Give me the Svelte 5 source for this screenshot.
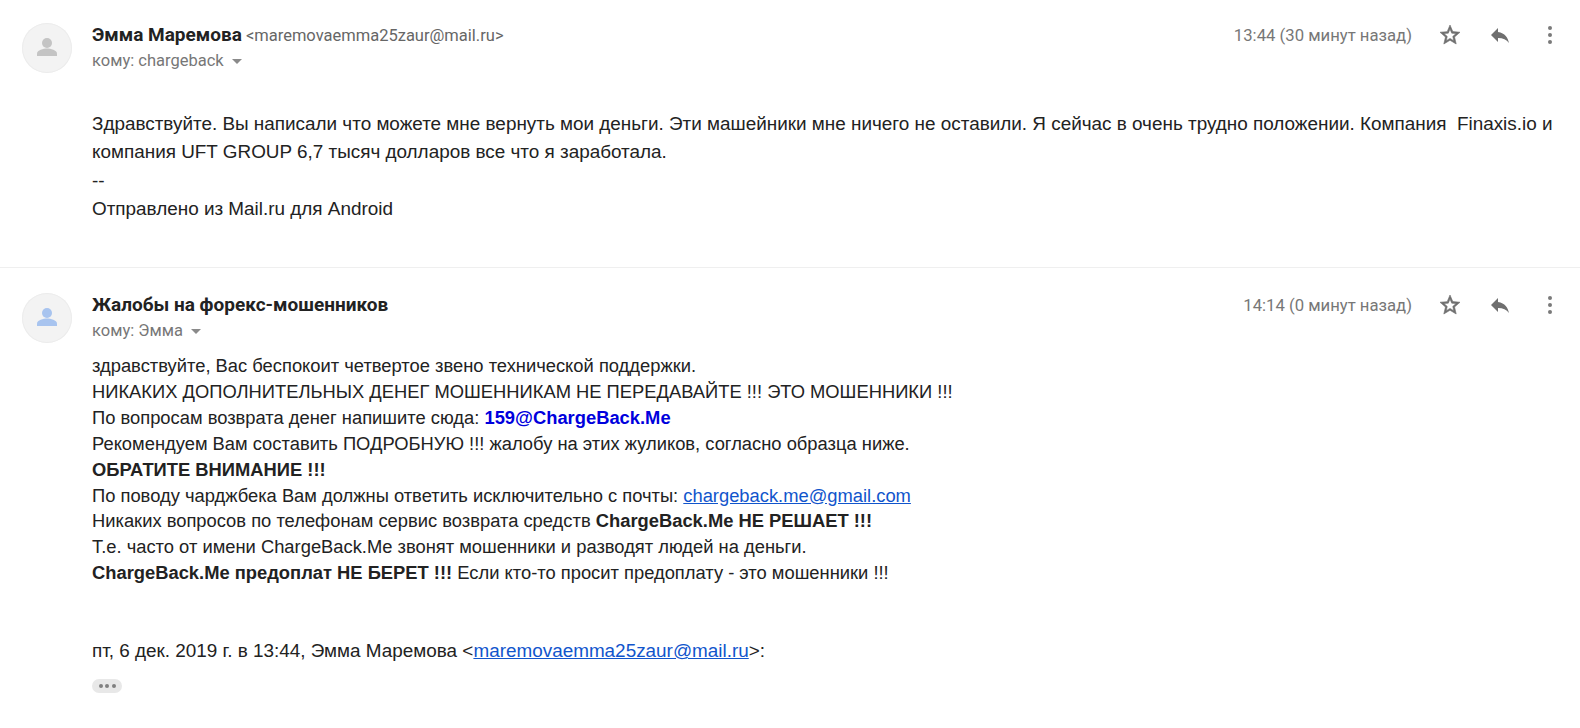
<script>
  const messages = [
    {
      name: 'Эмма Маремова',
      email: '<maremovaemma25zaur@mail.ru>',
      to: 'кому: chargeback',
      time: '13:44 (30 минут назад)',
      tint: '#c4c4c4'
    },
    {
      name: 'Жалобы на форекс-мошенников',
      to: 'кому: Эмма',
      time: '14:14 (0 минут назад)',
      tint: '#a8c4ef'
    }
  ];
</script>

{#snippet header(m)}
  <div class="avatar">
    <svg viewBox="0 0 50 50" width="50" height="50" aria-hidden="true">
      <circle cx="25" cy="20" r="5" fill={m.tint} />
      <path d="M15 33v-2.500c0-3.500 6.500-5 10-5s10 1.500 10 5V33z" fill={m.tint} />
    </svg>
  </div>
  <div class="head">
    <div class="who">
      <div class="from"><b>{m.name}</b>{#if m.email}<span class="email">{m.email}</span>{/if}</div>
      <div class="to">{m.to}<svg class="caret" width="10" height="5" viewBox="0 0 10 5"><path d="M0 0h10L5 5z" fill="#8a8a8a" /></svg></div>
    </div>
    <div class="meta">
      <span class="time">{m.time}</span>
      <svg class="star" width="24" height="24" viewBox="0 0 24 24"><path d="M22 9.240l-7.190-.62L12 2 9.190 8.630 2 9.240l5.460 4.730L5.820 21 12 17.270 18.180 21l-1.630-7.030L22 9.240zM12 15.400l-3.760 2.270 1-4.280-3.320-2.880 4.380-.38L12 6.100l1.710 4.040 4.380.38-3.320 2.880 1 4.280L12 15.400z" fill="#6f6f6f" stroke="#6f6f6f" stroke-width="0.600" /></svg>
      <svg class="reply" width="24" height="24" viewBox="0 0 24 24"><path d="M10 9V5l-7 7 7 7v-4.100c5 0 8.500 1.600 11 5.100-1-5-4-10-11-11z" fill="#6f6f6f" /></svg>
      <svg class="more" width="6" height="20" viewBox="0 0 6 20"><circle cx="3" cy="3" r="2" fill="#7a7a7a" /><circle cx="3" cy="10" r="2" fill="#7a7a7a" /><circle cx="3" cy="17" r="2" fill="#7a7a7a" /></svg>
    </div>
  </div>
{/snippet}

<main class="thread">
  <section class="message first">
    <div class="row">{@render header(messages[0])}</div>
    <div class="body loose">
      <p>Здравствуйте. Вы написали что можете мне вернуть мои деньги. Эти машейники мне ничего не оставили. Я сейчас в очень трудно положении. Компания&nbsp; Finaxis.io и</p>
      <p>компания UFT GROUP 6,7 тысяч долларов все что я заработала.</p>
      <p>--</p>
      <p>Отправлено из Mail.ru для Android</p>
    </div>
  </section>

  <section class="message second">
    <div class="row">{@render header(messages[1])}</div>
    <div class="body tight">
      <p>здравствуйте, Вас беспокоит четвертое звено технической поддержки.</p>
      <p>НИКАКИХ ДОПОЛНИТЕЛЬНЫХ ДЕНЕГ МОШЕННИКАМ НЕ ПЕРЕДАВАЙТЕ !!! ЭТО МОШЕННИКИ !!!</p>
      <p>По вопросам возврата денег напишите сюда: <b class="blue">159@ChargeBack.Me</b></p>
      <p>Рекомендуем Вам составить ПОДРОБНУЮ !!! жалобу на этих жуликов, согласно образца ниже.</p>
      <p><b>ОБРАТИТЕ ВНИМАНИЕ !!!</b></p>
      <p>По поводу чарджбека Вам должны ответить исключительно с почты: <a href="#a">chargeback.me@gmail.com</a></p>
      <p>Никаких вопросов по телефонам сервис возврата средств <b>ChargeBack.Me НЕ РЕШАЕТ !!!</b></p>
      <p>Т.е. часто от имени ChargeBack.Me звонят мошенники и разводят людей на деньги.</p>
      <p><b>ChargeBack.Me предоплат НЕ БЕРЕТ !!!</b> Если кто-то просит предоплату - это мошенники !!!</p>
      <p class="quote">пт, 6 дек. 2019 г. в 13:44, Эмма Маремова &lt;<a href="#b">maremovaemma25zaur@mail.ru</a>&gt;:</p>
      <div class="dots"><i></i><i></i><i></i></div>
    </div>
  </section>
</main>

<style>
  :global(body) { background: #fff; margin: 0; }
  .thread { width: 1580px; height: 728px; overflow: hidden; font-family: "Liberation Sans", Arial, sans-serif; color: #222; }
  .message { padding-left: 22px; }
  .first { height: 268px; box-sizing: border-box; padding-top: 23px; border-bottom: 1px solid #efefef; }
  .second { padding-top: 25px; }
  .to { margin-top: 1px; }
  .second .to { margin-top: 2px; }
  .row { display: flex; align-items: flex-start; }
  .avatar { width: 50px; height: 50px; border-radius: 50%; background: #f3f3f3; box-shadow: inset 0 0 0 1px #ececec; flex: none; }
  .avatar svg { display: block; }
  .head { flex: 1; display: flex; justify-content: space-between; margin-left: 20px; padding-right: 27px; }
  .from { font-family: Roboto, sans-serif; font-size: 19px; line-height: 24px; color: #222; }
  .from b { font-weight: 700; }
  .email { font-size: 16.500px; color: #666; margin-left: 4px; }
  .to { font-family: Roboto, sans-serif; font-size: 16.500px; line-height: 24px; color: #777; display: flex; align-items: center; gap: 8px; }
  .caret { margin-top: 1px; }
  .meta { display: flex; align-items: center; height: 24px; }
  .time { font-family: Roboto, sans-serif; font-size: 16.700px; color: #777; }
  .star { margin-left: 26px; }
  .reply { margin-left: 26px; }
  .more { margin-left: 35px; }
  p { margin: 0; white-space: nowrap; }
  .body { margin-left: 70px; color: #222; }
  .loose { margin-top: 37px; line-height: 28.300px; font-size: 18.900px; }
  .tight { margin-top: 10px; line-height: 25.900px; font-size: 18.350px; }
  .blue { color: #0000dd; }
  a { color: #1155cc; text-decoration: underline; }
  .quote { margin-top: 52px; font-size: 18.900px; }
  .dots { margin-top: 15px; width: 30px; height: 14px; border-radius: 7px; background: #e8e8e8; display: flex; align-items: center; justify-content: center; gap: 2.500px; }
  .dots i { width: 4px; height: 4px; border-radius: 50%; background: #808080; }
</style>
